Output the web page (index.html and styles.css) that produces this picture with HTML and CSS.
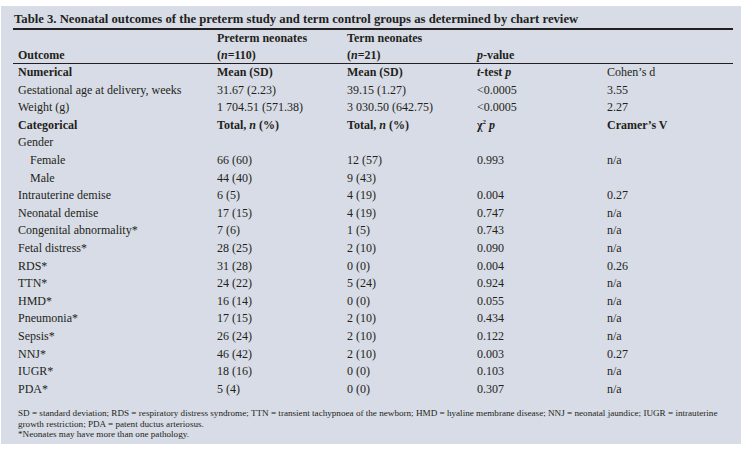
FILE: index.html
```html
<!DOCTYPE html>
<html lang="en">
<head>
<meta charset="utf-8">
<title>Table 3</title>
<link rel="stylesheet" href="styles.css">
</head>
<body>
<div class="panel">
  <h1 class="title">Table 3. Neonatal outcomes of the preterm study and term control groups as determined by chart review</h1>
  <table class="data">
    <colgroup>
      <col class="c-label"><col class="c-num"><col class="c-num"><col class="c-num"><col>
    </colgroup>
    <thead>
      <tr class="h1">
        <th></th><th>Preterm neonates</th><th>Term neonates</th><th></th><th></th>
      </tr>
      <tr class="h2">
        <th>Outcome</th><th>(<i>n</i>=110)</th><th>(<i>n</i>=21)</th><th><i>p</i>-value</th><th></th>
      </tr>
    </thead>
    <tbody>
      <tr class="sec"><td>Numerical</td><td>Mean (SD)</td><td>Mean (SD)</td><td><i>t</i>-test <i>p</i></td><td class="reg">Cohen’s d</td></tr>
      <tr><td>Gestational age at delivery, weeks</td><td>31.67 (2.23)</td><td>39.15 (1.27)</td><td>&lt;0.0005</td><td>3.55</td></tr>
      <tr><td>Weight (g)</td><td>1 704.51 (571.38)</td><td>3 030.50 (642.75)</td><td>&lt;0.0005</td><td>2.27</td></tr>
      <tr class="sec"><td>Categorical</td><td>Total, <i>n</i> (%)</td><td>Total, <i>n</i> (%)</td><td>χ<sup>2</sup> <i>p</i></td><td>Cramer’s V</td></tr>
      <tr><td>Gender</td><td></td><td></td><td></td><td></td></tr>
      <tr><td class="ind">Female</td><td>66 (60)</td><td>12 (57)</td><td>0.993</td><td>n/a</td></tr>
      <tr><td class="ind">Male</td><td>44 (40)</td><td>9 (43)</td><td></td><td></td></tr>
      <tr><td>Intrauterine demise</td><td>6 (5)</td><td>4 (19)</td><td>0.004</td><td>0.27</td></tr>
      <tr><td>Neonatal demise</td><td>17 (15)</td><td>4 (19)</td><td>0.747</td><td>n/a</td></tr>
      <tr><td>Congenital abnormality*</td><td>7 (6)</td><td>1 (5)</td><td>0.743</td><td>n/a</td></tr>
      <tr><td>Fetal distress*</td><td>28 (25)</td><td>2 (10)</td><td>0.090</td><td>n/a</td></tr>
      <tr><td>RDS*</td><td>31 (28)</td><td>0 (0)</td><td>0.004</td><td>0.26</td></tr>
      <tr><td>TTN*</td><td>24 (22)</td><td>5 (24)</td><td>0.924</td><td>n/a</td></tr>
      <tr><td>HMD*</td><td>16 (14)</td><td>0 (0)</td><td>0.055</td><td>n/a</td></tr>
      <tr><td>Pneumonia*</td><td>17 (15)</td><td>2 (10)</td><td>0.434</td><td>n/a</td></tr>
      <tr><td>Sepsis*</td><td>26 (24)</td><td>2 (10)</td><td>0.122</td><td>n/a</td></tr>
      <tr><td>NNJ*</td><td>46 (42)</td><td>2 (10)</td><td>0.003</td><td>0.27</td></tr>
      <tr><td>IUGR*</td><td>18 (16)</td><td>0 (0)</td><td>0.103</td><td>n/a</td></tr>
      <tr><td>PDA*</td><td>5 (4)</td><td>0 (0)</td><td>0.307</td><td>n/a</td></tr>
    </tbody>
  </table>
  <div class="notes">
    <p>SD = standard deviation; RDS = respiratory distress syndrome; TTN = transient tachypnoea of the newborn; HMD = hyaline membrane disease; NNJ = neonatal jaundice; IUGR = intrauterine growth restriction; PDA = patent ductus arteriosus.</p>
    <p>*Neonates may have more than one pathology.</p>
  </div>
</div>
</body>
</html>
```
FILE: styles.css
```css
html, body {
  margin: 0;
  padding: 0;
  background: #ffffff;
}

body {
  padding: 6px 0 0 1px;
  font-family: "Liberation Serif", "Times New Roman", serif;
  color: #231f20;
}

.panel {
  width: 740px;
  height: 438px;
  box-sizing: border-box;
  background: #d8dce6;
  padding: 4px 8px 0 12px;
}

.title {
  margin: 0;
  font-size: 12.7px;
  line-height: 18px;
  font-weight: bold;
  padding-left: 1px;
  border-bottom: 2px solid #231f20;
}

.data {
  width: 720px;
  border-collapse: collapse;
  table-layout: fixed;
  font-size: 12px;
}

.c-label { width: 204px; }
.c-num { width: 130px; }

.data th,
.data td {
  padding: 0;
  text-align: left;
  white-space: nowrap;
  vertical-align: middle;
}

.data th:first-child,
.data td:first-child {
  padding-left: 5px;
}

.data td.ind {
  padding-left: 17px;
}

.data thead th {
  height: 16.5px;
  line-height: 16.5px;
  font-weight: bold;
}

.data thead tr.h2 th {
  border-bottom: 1px solid #231f20;
}

.data tbody td {
  height: 17.6px;
  line-height: 17.6px;
}

.data tr.sec td {
  font-weight: bold;
}

.data tr.sec td.reg {
  font-weight: normal;
}

.data sup {
  font-size: 7px;
  line-height: 0;
  vertical-align: 5px;
}

.notes {
  padding: 10px 0 0 5px;
  font-size: 9.15px;
  line-height: 10.5px;
}

.notes p {
  margin: 0;
}
```
